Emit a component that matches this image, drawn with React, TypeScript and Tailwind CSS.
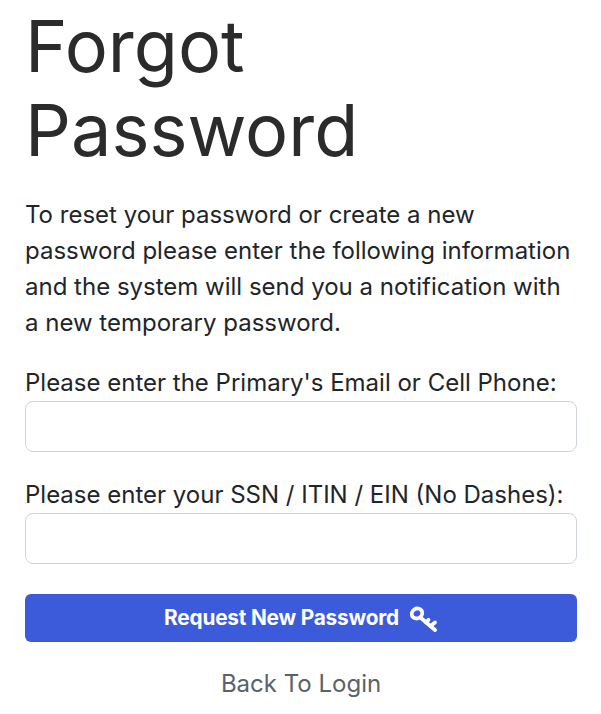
export default function App() {
  return (
    <div className="min-h-screen bg-white pl-[25px] pr-[24px] font-['Inter',sans-serif] text-[#212529]">
      <h1 className="text-[72px] leading-[84px] font-normal text-[#2b2b2b] mb-[25px] pt-[4px]">
        Forgot
        <br />
        Password
      </h1>
      <p className="text-[24px] leading-[36px] mb-[24px]">
        To reset your password or create a new password please enter the following information and the system will send you a notification with a new temporary password.
      </p>
      <form>
        <div className="mb-[25px]">
          <label className="block text-[24px] leading-[36px]">Please enter the Primary's Email or Cell Phone:</label>
          <input className="block w-full h-[51px] rounded-[8px] border border-[#ced4da] bg-white" />
        </div>
        <div className="mb-[30px]">
          <label className="block text-[24px] leading-[36px]">Please enter your SSN / ITIN / EIN (No Dashes):</label>
          <input className="block w-full h-[51px] rounded-[8px] border border-[#ced4da] bg-white" />
        </div>
        <button type="button" className="flex w-full h-[48px] items-center justify-center gap-[11px] rounded-[6px] bg-[#3b5bdb] text-white text-[20.8px] font-bold tracking-[-0.2px]">
          Request New Password
          <svg viewBox="0 0 28 28" className="w-[28px] h-[28px]" fill="none" stroke="currentColor" strokeWidth="3.8" strokeLinecap="round" strokeLinejoin="round">
            <ellipse cx="7" cy="9.5" rx="5.4" ry="4.8" transform="rotate(-35 7 9.5)" />
            <path d="M11 14l14 12" />
            <path d="M16 18.3l2.5-2.5" />
            <path d="M20.5 22l4.5-3.5" />
          </svg>
        </button>
      </form>
      <div className="text-center mt-[24px] text-[24px] leading-[36px] text-[#5a6268]">Back To Login</div>
    </div>
  );
}
